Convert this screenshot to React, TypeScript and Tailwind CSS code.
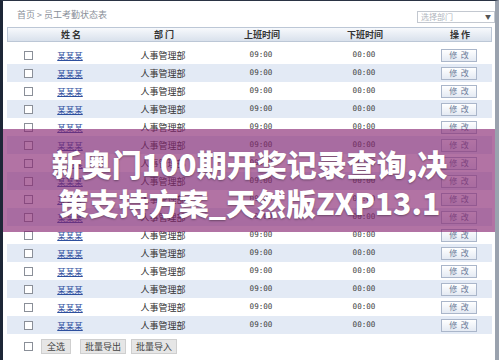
import React from "react";

const rows = Array.from({ length: 16 }, (_, i) => i);

function Check() {
  return <span className="block w-[9px] h-[9px] border border-[#8a8f98] bg-white" />;
}

export default function App() {
  return (
    <div
      className="relative w-[499px] h-[360px] overflow-hidden bg-white border-l-[3px] border-t border-r-[4px] border-l-[#1d2636] border-t-[#2a3344] border-r-[#9aa2ae]"
      style={{ fontFamily: '"Noto Sans CJK SC", "Noto Sans", sans-serif' }}
    >
      {/* top bar */}
      <div className="flex items-center justify-between h-[26px] pl-[14px] pr-0">
        <div className="text-[9px] text-[#8a8f99] mt-[2px]">首页 &gt; 员工考勤状态表</div>
        <div className="flex items-center justify-between w-[78px] h-[12px] mt-[6px] border border-[#c3c8d0] bg-white px-[3px]">
          <span className="text-[8px] text-[#b0b5bd] leading-none">选择部门</span>
          <span className="text-[6px] text-[#555] leading-none">▼</span>
        </div>
      </div>

      {/* table */}
      <div className="ml-[4px] w-[485px]">
        <div className="grid grid-cols-[42px_42px_144px_52px_154px_36px_15px] items-center h-[15px] border border-[#bcc7d6] bg-gradient-to-b from-[#f7f9fc] to-[#d9e1ec] text-[9px] font-bold text-[#333]">
          <span />
          <span className="text-center">姓 名</span>
          <span className="text-center">部 门</span>
          <span className="text-center">上班时间</span>
          <span className="text-center">下班时间</span>
          <span className="text-center">操 作</span>
          <span />
        </div>
        <div className="mt-[4px]">
          {rows.map((i) => (
            <div
              key={i}
              className={`grid grid-cols-[42px_42px_144px_52px_154px_36px_15px] items-center h-[18px] ${
                i % 2 === 1 ? "bg-[#e3eaf5]" : "bg-white"
              }`}
            >
              <span className="flex justify-center">
                <Check />
              </span>
              <span className="text-center text-[8.5px] text-[#2d4f9e] underline leading-none">某某某</span>
              <span className="text-center text-[9px] text-[#333] leading-none">人事管理部</span>
              <span
                className="text-center text-[7.6px] text-[#444] leading-none"
                style={{ fontFamily: '"DejaVu Sans Mono", monospace' }}
              >
                09:00
              </span>
              <span
                className="text-center text-[7.6px] text-[#444] leading-none"
                style={{ fontFamily: '"DejaVu Sans Mono", monospace' }}
              >
                00:00
              </span>
              <span className="flex items-center justify-center h-[13px] border border-[#aab6ca] bg-gradient-to-b from-white to-[#e4eaf3] text-[8px] text-[#6b7a98] leading-none">
                修&nbsp;&nbsp;改
              </span>
              <span />
            </div>
          ))}
        </div>
        <div className="flex items-center h-[18px] mt-[3px]">
          <span className="w-[42px] flex justify-center">
            <Check />
          </span>
          <button className="-ml-[8px] h-[15px] px-[5px] bg-[#e6e6e6] border border-[#cfcfcf] text-[9px] text-[#444] leading-none">
            全选
          </button>
          <button className="ml-[9px] h-[15px] px-[4px] bg-[#e6e6e6] border border-[#cfcfcf] text-[9px] text-[#444] leading-none">
            批量导出
          </button>
          <button className="ml-[5px] h-[15px] px-[4px] bg-[#e6e6e6] border border-[#cfcfcf] text-[9px] text-[#444] leading-none">
            批量导入
          </button>
        </div>
      </div>

      {/* overlay */}
      <div className="absolute left-[-3px] right-[-4px] top-[128px] h-[103px] pt-[5px] bg-[rgba(134,36,112,0.64)] flex flex-col items-center justify-center">
        <div className="text-white font-black text-[30px] leading-[39px] text-center [text-shadow:0_1px_2px_rgba(0,0,0,0.35)] whitespace-nowrap">
          新奥门100期开奖记录查询,决
        </div>
        <div className="text-white font-black text-[30px] leading-[39px] text-center [text-shadow:0_1px_2px_rgba(0,0,0,0.35)] whitespace-nowrap">
          策支持方案_天然版ZXP13.1
        </div>
      </div>
    </div>
  );
}
